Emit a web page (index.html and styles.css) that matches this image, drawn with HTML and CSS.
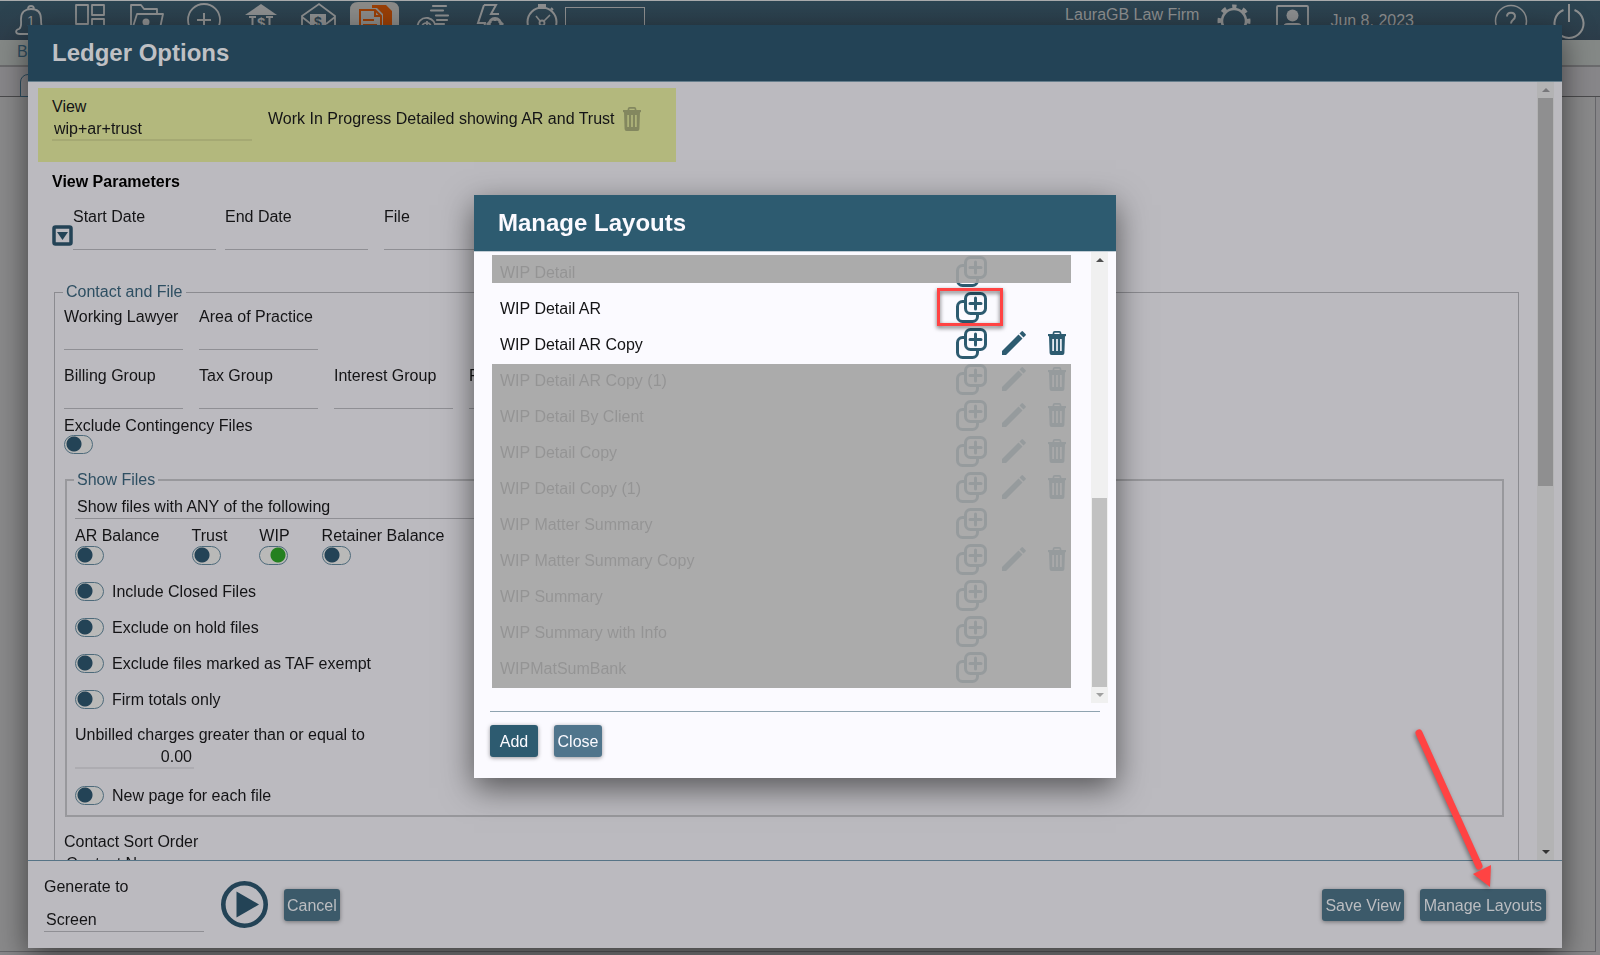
FILE: index.html
```html
<!DOCTYPE html>
<html lang="en">
<head>
<meta charset="utf-8">
<title>Ledger Options</title>
<link rel="stylesheet" href="styles.css">
</head>
<body>
<svg class="defs" aria-hidden="true">
  <symbol id="copy" viewBox="0 0 31 31">
    <path d="M9 9.500H6.500a5 5 0 0 0-5 5v10a5 5 0 0 0 5 5h10a5 5 0 0 0 5-5V22M14.500 1.500h10a5 5 0 0 1 5 5v10a5 5 0 0 1-5 5h-10a5 5 0 0 1-5-5v-10a5 5 0 0 1 5-5z" fill="none" stroke="currentColor" stroke-width="3"/>
    <path d="M19.500 6v11M14 11.500h11" stroke="currentColor" stroke-width="3" stroke-linecap="round"/>
  </symbol>
  <symbol id="pencil" viewBox="0 0 24 24">
    <path d="M0 24v-4L16.500 3.500l4 4L4 24zM17.500 2.500l2-2a1 1 0 0 1 1.500 0l2.500 2.500a1 1 0 0 1 0 1.500l-2 2z" fill="currentColor"/>
  </symbol>
  <symbol id="trash" viewBox="0 0 18 24">
    <path d="M5.500 3.500V2A1.200 1.200 0 0 1 6.700.9h4.600A1.200 1.200 0 0 1 12.500 2v1.500" fill="none" stroke="currentColor" stroke-width="1.700"/>
    <path d="M0 3h18v2.200H0z" fill="currentColor"/>
    <path fill-rule="evenodd" d="M1 5h16l-.6 17a2 2 0 0 1-2 2H3.600a2 2 0 0 1-2-2zM4.300 8v12h1.600V8zM8.200 8v12h1.600V8zM12.100 8v12h1.600V8z" fill="currentColor"/>
  </symbol>
</svg>

<div class="app">
  <nav class="topbar">
    <svg class="cell" viewBox="0 0 57 40"><path d="M16 34c-5 0-5-4-1-5 3-2 2-5 2-10 0-7 4-10 10-10s10 3 10 10c0 5 0 8 2 10M16 34h8l4 3 4-3M24 9c0-4 6-4 6 0" fill="none" stroke="currentColor" stroke-width="1.800"/><text x="23" y="26" font-size="14" fill="currentColor">1</text></svg>
    <svg class="cell" viewBox="0 0 57 40"><path d="M15 5h12v19H15zM31 5h12v10H31zM31 19h12v18H31zM15 28h12v9H15z" fill="none" stroke="currentColor" stroke-width="1.800" stroke-linejoin="round"/></svg>
    <svg class="cell" viewBox="0 0 57 40"><path d="M13 33V5h10l3 4h13v5M13 33l6-19h26l-4 19z" fill="none" stroke="currentColor" stroke-width="1.800" stroke-linejoin="round"/><circle cx="28" cy="22" r="3.500" fill="currentColor"/></svg>
    <svg class="cell" viewBox="0 0 57 40"><circle cx="29" cy="20" r="16" fill="none" stroke="currentColor" stroke-width="1.800"/><path d="M29 13v14M22 20h14" stroke="currentColor" stroke-width="2"/></svg>
    <svg class="cell" viewBox="0 0 57 40"><path d="M13 15L29 4l16 11z" fill="currentColor"/><path d="M17 17h7M20.500 17v18M34 17h7M37.500 17v18" stroke="currentColor" stroke-width="2"/><text x="25" y="28" font-size="15" font-weight="bold" fill="currentColor">$</text></svg>
    <svg class="cell" viewBox="0 0 57 40"><path d="M13 16L30 4l16 12v20H13zM13 17l9 7M46 17l-9 7" fill="none" stroke="currentColor" stroke-width="1.800"/><path d="M21 14h16v14H21z" fill="currentColor"/><text class="dark" x="25" y="27" font-size="14" font-weight="bold">$</text></svg>
    <svg class="cell" viewBox="0 0 57 40"><path class="tile" d="M4 40V10q0-8 8-8h33q8 0 8 8v30z"/><path class="orange" d="M26 5h14l6 6v29H37V14l-6-6h-5z"/><path class="orange-line" d="M14 36V10h15l6 6v21M29 10v6h6M17 20h11M17 25h14"/></svg>
    <svg class="cell" viewBox="0 0 57 40"><path d="M30 6h13M28 10.500h12M33 15.500h12M34 20h10M32 24h9" stroke="currentColor" stroke-width="2.200" stroke-linecap="round"/><path d="M15 30c-2-8 4-13 10-12 5 1 8 5 7 10M19 27c0-5 9-6 9 0M24 21v6" fill="none" stroke="currentColor" stroke-width="1.800"/></svg>
    <svg class="cell" viewBox="0 0 57 40"><path d="M24 5h12l-5 9h8M24 5l-6 18h7l-2 13" fill="none" stroke="currentColor" stroke-width="2"/><path d="M29 26c0-10 12-10 12 0M31 21l-4 4M39 21l4 4M35 18v3" fill="none" stroke="currentColor" stroke-width="3"/></svg>
    <svg class="timer" viewBox="0 0 48 40"><circle cx="25" cy="22" r="14.500" fill="none" stroke="currentColor" stroke-width="2"/><path d="M22 5h6v3h-6zM34 8l2 2" stroke="currentColor" stroke-width="2" fill="currentColor"/><circle cx="25" cy="23" r="2.500" fill="none" stroke="currentColor" stroke-width="1.800"/><path d="M19 16l4 5M33 15l-6 6" stroke="currentColor" stroke-width="1.600"/></svg>
    <input class="quick" type="text" aria-label="Quick search">
    <span class="firm">LauraGB Law Firm</span>
    <svg class="gear" viewBox="0 0 40 40"><circle cx="20" cy="21" r="12" fill="none" stroke="currentColor" stroke-width="2.500"/><circle cx="20" cy="21" r="14.500" fill="none" stroke="currentColor" stroke-width="4" stroke-dasharray="5 6.400" stroke-dashoffset="2.500" transform="rotate(-90 20 21)"/></svg>
    <svg class="user" viewBox="0 0 40 40"><path d="M4 36V7q0-1 1-1h29q1 0 1 1v29" fill="none" stroke="currentColor" stroke-width="1.800"/><circle cx="19.500" cy="15.500" r="6" fill="currentColor"/><path d="M10 28q0-5 5-5h9q5 0 5 5v6H10z" fill="currentColor"/></svg>
    <span class="date">Jun 8, 2023</span>
    <svg class="help" viewBox="0 0 40 40"><circle cx="20" cy="21" r="15.500" fill="none" stroke="currentColor" stroke-width="1.500"/><path d="M16 16.500c0-5 8-5 8 0 0 3.500-4 3-4 7" fill="none" stroke="currentColor" stroke-width="2"/></svg>
    <svg class="power" viewBox="0 0 40 40"><path d="M13.500 10a14.500 14.500 0 1 0 11 0M19 4v18" fill="none" stroke="currentColor" stroke-width="2"/></svg>
  </nav>
  <div class="crumbs">B</div>
  <div class="tabs"><div class="tab"></div></div>
  <div class="page"></div>
</div>

<div class="stage">
  <section class="dialog" aria-labelledby="ledger-title">
    <header class="bar"><h1 id="ledger-title">Ledger Options</h1></header>
    <div class="scroller">
      <div class="content">
        <div class="view-box">
          <div class="field view-field">
            <label for="view">View</label>
            <select id="view" class="line"><option>wip+ar+trust</option></select>
          </div>
          <span>Work In Progress Detailed showing AR and Trust</span>
          <button class="icon" aria-label="Delete view"><svg class="trash"><use href="#trash"/></svg></button>
        </div>
        <h2>View Parameters</h2>
        <div class="dates">
          <button class="icon drop" aria-label="Date presets"><svg viewBox="0 0 21 21"><rect x="2" y="2" width="17" height="17" rx="1.500" fill="none" stroke="currentColor" stroke-width="3.500"/><path d="M5 7h11l-5.500 8z" fill="currentColor"/></svg></button>
          <div class="field"><label for="start">Start Date</label><input id="start" class="line" type="text"></div>
          <div class="field"><label for="end">End Date</label><input id="end" class="line" type="text"></div>
          <div class="field file"><label for="file">File</label><input id="file" class="line" type="text"></div>
        </div>

        <fieldset class="contact">
          <legend>Contact and File</legend>
          <div class="cols first">
            <div class="field"><label for="lawyer">Working Lawyer</label><input id="lawyer" class="line" type="text"></div>
            <div class="field"><label for="area">Area of Practice</label><input id="area" class="line" type="text"></div>
          </div>
          <div class="cols second">
            <div class="field"><label for="billing">Billing Group</label><input id="billing" class="line" type="text"></div>
            <div class="field"><label for="tax">Tax Group</label><input id="tax" class="line" type="text"></div>
            <div class="field"><label for="interest">Interest Group</label><input id="interest" class="line" type="text"></div>
            <div class="field"><label for="fgroup">F</label><input id="fgroup" class="line" type="text"></div>
          </div>
          <label class="stack contingency">Exclude Contingency Files<input class="toggle" type="checkbox"></label>

          <fieldset class="files">
            <legend>Show Files</legend>
            <select class="line any" aria-label="Show files"><option>Show files with ANY of the following</option></select>
            <div class="balances">
              <label class="stack">AR Balance<input class="toggle" type="checkbox"></label>
              <label class="stack">Trust<input class="toggle" type="checkbox"></label>
              <label class="stack">WIP<input class="toggle" type="checkbox" checked></label>
              <label class="stack">Retainer Balance<input class="toggle" type="checkbox"></label>
            </div>
            <div class="checks">
              <label><input class="toggle" type="checkbox">Include Closed Files</label>
              <label><input class="toggle" type="checkbox">Exclude on hold files</label>
              <label><input class="toggle" type="checkbox">Exclude files marked as TAF exempt</label>
              <label><input class="toggle" type="checkbox">Firm totals only</label>
              <div class="field"><label for="unbilled">Unbilled charges greater than or equal to</label><input id="unbilled" class="line amount" type="text" value="0.00"></div>
              <label><input class="toggle" type="checkbox">New page for each file</label>
            </div>
          </fieldset>
          <div class="field sort"><label for="sort">Contact Sort Order</label><select id="sort" class="line"><option>Contact Name</option></select></div>
        </fieldset>
      </div>
      <div class="track" aria-hidden="true"><i class="up"></i><div class="rail"><div class="thumb"></div></div><i class="down"></i></div>
    </div>
    <footer class="actions">
      <div class="field generate"><label for="gen">Generate to</label><select id="gen" class="line"><option>Screen</option></select></div>
      <button class="icon play" aria-label="Generate"><svg viewBox="0 0 47 47"><circle cx="23.500" cy="23.500" r="21.200" fill="none" stroke="currentColor" stroke-width="4.600"/><path d="M15.500 10.500L38 23.500l-22.500 13z" fill="currentColor"/></svg></button>
      <button class="btn">Cancel</button>
      <button class="btn save">Save View</button>
      <button class="btn manage">Manage Layouts
        <svg class="pointer" viewBox="0 0 90 170" aria-hidden="true"><path d="M10 10L70 143" stroke="#ff4343" stroke-width="7" stroke-linecap="round"/><path d="M64 151l18-9-1 22z" fill="#ff4343" stroke="none"/></svg>
      </button>
    </footer>
  </section>
</div>

<div class="stage modal-stage">
  <section class="modal" aria-labelledby="modal-title">
    <header class="bar"><h1 id="modal-title">Manage Layouts</h1></header>
    <div class="modal-body">
      <div class="list-wrap">
        <ul class="list">
          <li><span>WIP Detail</span><button class="icon" aria-label="Copy"><svg class="copy"><use href="#copy"/></svg></button></li>
          <li><span>WIP Detail AR</span><button class="icon marked" aria-label="Copy"><svg class="copy"><use href="#copy"/></svg></button></li>
          <li><span>WIP Detail AR Copy</span><button class="icon" aria-label="Copy"><svg class="copy"><use href="#copy"/></svg></button><button class="icon" aria-label="Edit"><svg class="pencil"><use href="#pencil"/></svg></button><button class="icon" aria-label="Delete"><svg class="trash"><use href="#trash"/></svg></button></li>
          <li><span>WIP Detail AR Copy (1)</span><button class="icon" aria-label="Copy"><svg class="copy"><use href="#copy"/></svg></button><button class="icon" aria-label="Edit"><svg class="pencil"><use href="#pencil"/></svg></button><button class="icon" aria-label="Delete"><svg class="trash"><use href="#trash"/></svg></button></li>
          <li><span>WIP Detail By Client</span><button class="icon" aria-label="Copy"><svg class="copy"><use href="#copy"/></svg></button><button class="icon" aria-label="Edit"><svg class="pencil"><use href="#pencil"/></svg></button><button class="icon" aria-label="Delete"><svg class="trash"><use href="#trash"/></svg></button></li>
          <li><span>WIP Detail Copy</span><button class="icon" aria-label="Copy"><svg class="copy"><use href="#copy"/></svg></button><button class="icon" aria-label="Edit"><svg class="pencil"><use href="#pencil"/></svg></button><button class="icon" aria-label="Delete"><svg class="trash"><use href="#trash"/></svg></button></li>
          <li><span>WIP Detail Copy (1)</span><button class="icon" aria-label="Copy"><svg class="copy"><use href="#copy"/></svg></button><button class="icon" aria-label="Edit"><svg class="pencil"><use href="#pencil"/></svg></button><button class="icon" aria-label="Delete"><svg class="trash"><use href="#trash"/></svg></button></li>
          <li><span>WIP Matter Summary</span><button class="icon" aria-label="Copy"><svg class="copy"><use href="#copy"/></svg></button></li>
          <li><span>WIP Matter Summary Copy</span><button class="icon" aria-label="Copy"><svg class="copy"><use href="#copy"/></svg></button><button class="icon" aria-label="Edit"><svg class="pencil"><use href="#pencil"/></svg></button><button class="icon" aria-label="Delete"><svg class="trash"><use href="#trash"/></svg></button></li>
          <li><span>WIP Summary</span><button class="icon" aria-label="Copy"><svg class="copy"><use href="#copy"/></svg></button></li>
          <li><span>WIP Summary with Info</span><button class="icon" aria-label="Copy"><svg class="copy"><use href="#copy"/></svg></button></li>
          <li><span>WIPMatSumBank</span><button class="icon" aria-label="Copy"><svg class="copy"><use href="#copy"/></svg></button></li>
        </ul>
        <div class="mask mask-top"></div>
        <div class="mask mask-rest"></div>
      </div>
      <div class="track light" aria-hidden="true"><i class="up"></i><div class="rail"><div class="thumb"></div></div><i class="down"></i></div>
    </div>
    <footer class="modal-actions">
      <button class="btn add">Add</button>
      <button class="btn close">Close</button>
    </footer>
  </section>
</div>
</body>
</html>
```

FILE: styles.css
```css
* { box-sizing: border-box; }

html, body { height: 100%; }

body {
  margin: 0;
  overflow: hidden;
  background: #88878a;
  color: #141416;
  font: 16px/18px "Liberation Sans", Arial, sans-serif;
}

h1, h2, ul, fieldset { margin: 0; padding: 0; }

button, input, select {
  margin: 0;
  padding: 0;
  border: 0;
  border-radius: 0;
  background: none;
  color: inherit;
  font: inherit;
}

svg { display: block; }
.defs { position: absolute; width: 0; height: 0; }

/* Application behind the dialogs */
.app {
  display: flex;
  flex-direction: column;
  height: 100%;
  padding-bottom: 3px;
}

.topbar {
  display: flex;
  flex: none;
  height: 40px;
  padding: 0 10px 0 4px;
  border-top: 1px solid #a9abac;
  background: linear-gradient(#2c4552, #2d3d4a);
  color: #8d8f90;
}

.topbar svg { flex: none; height: 40px; margin-top: -1px; }
.cell { width: 57px; }
.timer { width: 48px; }
.dark { fill: #2d414e; }
.tile { fill: #8b8b89; }
.orange { fill: #9a3f06; }
.orange-line { fill: #8b8b89; stroke: #9a3f06; stroke-width: 2; }

.quick {
  width: 80px;
  height: 28px;
  margin-top: 6px;
  border: 1px solid #8d8f90;
}

.firm { margin: 5px 15px 0 auto; }
.gear { width: 40px; margin-right: 19px; }
.user { width: 40px; margin-right: 17px; }
.date { margin: 11px 77px 0 0; }
.help { width: 40px; margin-right: 19px; }
.power { width: 40px; }

.crumbs {
  flex: none;
  height: 27px;
  padding: 3px 17px;
  border-bottom: 2px solid #6b6b6d;
  background: #858987;
  color: #2e4f62;
}

.tabs {
  flex: none;
  height: 30px;
  padding: 7px 20px 0;
  border-bottom: 1px solid #4b4b4d;
}

.tab {
  width: 120px;
  height: 23px;
  border: 1px solid #2e4f62;
  border-radius: 8px 8px 0 0;
}

.page {
  flex: 1;
  margin-right: 4px;
  border: solid #66666a;
  border-width: 0 1px 1px 0;
  background: #8a8a8b;
}

/* Dialog frames */
.stage {
  position: fixed;
  inset: 0;
  display: flex;
  padding: 25px 38px 7px 28px;
}

.dialog {
  display: flex;
  flex: 1;
  flex-direction: column;
  min-width: 0;
  background: #bbbabf;
  box-shadow: 0 10px 30px rgba(0, 0, 0, .55);
}

.bar {
  flex: none;
  height: 57px;
  padding: 14px 24px;
  border-bottom: 1px solid #667e8c;
  background: #234356;
  color: #bfc0c4;
}

.bar h1 { font-size: 24px; line-height: 28px; }

.scroller { display: flex; flex: 1; min-height: 0; padding-right: 8px; }

.content {
  flex: 1;
  overflow: hidden;
  padding: 6px 18px 0 24px;
}

.view-box {
  display: flex;
  align-items: flex-start;
  width: 638px;
  height: 74px;
  margin-left: -14px;
  padding: 10px 14px;
  background: #b3b87d;
}

.view-box > span { margin: 12px 8px 0 16px; }
.view-box .icon { margin-top: 9px; color: #83875f; }
.view-field { width: 200px; }
.view-box .line { border-bottom: 2px solid #a5a973; }

.field { display: flex; flex-direction: column; }

.line {
  width: 100%;
  height: 24px;
  border-bottom: 1px solid #8f8f94;
  appearance: none;
}

select.line { height: 25px; padding: 2px 2px 0; }

.icon { display: grid; place-items: center; color: #234356; }
.trash { width: 18px; height: 24px; }
.pencil { width: 24px; height: 24px; }
.copy { width: 31px; height: 31px; }

h2 { margin-top: 11px; font-size: 16px; line-height: 18px; color: #000; }

.dates { display: flex; align-items: flex-end; margin-top: 17px; }
.dates .field { width: 143px; margin-right: 9px; }
.dates .file { margin-left: 7px; }
.drop { width: 21px; height: 21px; margin-bottom: 4px; }
.drop svg { width: 21px; height: 21px; }

fieldset { min-width: 0; border: 1px solid #8b8b90; }
legend { margin-left: -1px; padding: 0 3px; color: #2e4f62; }

.contact { margin: 33px 0 0 2px; padding: 0 14px 10px 9px; }
.cols { display: flex; gap: 16px; }
.cols .field { width: 119px; }
.first { margin-top: 7px; }
.second { margin-top: 17px; }

.stack { display: flex; flex-direction: column; align-items: flex-start; gap: 1px; }
.contingency { gap: 0; margin-top: 8px; }

.toggle {
  flex: none;
  width: 29px;
  height: 19px;
  border: 1px solid #4d6a7a;
  border-radius: 10px;
  appearance: none;
  background: radial-gradient(circle at 9px 8px, #234356 7px, #b9b9b8 8px);
}

.toggle:checked {
  background: radial-gradient(circle at 18px 8px, #24801f 7px, #b9b9b8 8px);
}

.files { margin: 17px 0 0 1px; padding: 0 8px 10px; border-width: 2px; border-color: #98989c; }
.any { width: 50%; margin-top: 5px; }
.balances { display: flex; gap: 32px; margin-top: 8px; }
.checks { display: flex; flex-direction: column; gap: 17px; margin-top: 17px; }
.checks > label { display: flex; align-items: center; gap: 8px; }

.amount {
  width: 119px;
  height: 25px;
  padding: 2px 2px 0 0;
  border-bottom: 2px solid #adacb1;
  text-align: right;
}

.sort { width: 240px; margin-top: 16px; }

/* Scroll bars */
.track {
  display: flex;
  flex: none;
  flex-direction: column;
  align-items: center;
  width: 17px;
  background: #b3b3b4;
}

.track i { width: 0; height: 0; border: solid transparent; border-width: 0 4px; }
.up { margin: 6px 0; }
.track .up { border-bottom: 4px solid #77777a; }
.down { margin: 6px 0; }
.track .down { border-top: 4px solid #333; }
.rail { flex: 1; align-self: stretch; padding: 0 1px; }
.thumb { height: 52%; background: #8f8f90; }
.light { background: #f0f0f0; }
.light .up { border-bottom-color: #505050; }
.light .down { border-top-color: #a0a0a0; }
.light .rail { display: flex; align-items: flex-end; }
.light .thumb { width: 100%; height: 45%; background: #c1c1c1; }

.btn {
  min-width: 48px;
  height: 32px;
  padding: 2px 3px 0;
  border-radius: 3px;
  background: #3c5a6a;
  box-shadow: 0 1px 4px rgba(0, 0, 0, .4);
  color: #bbbdc1;
  white-space: nowrap;
}

.actions {
  display: flex;
  flex: none;
  align-items: center;
  height: 88px;
  padding: 0 16px;
  border-top: 1px solid #567486;
}

.generate { width: 160px; gap: 11px; margin-right: 17px; padding-top: 1px; }
.play { margin-right: 16px; }
.play svg { width: 47px; height: 47px; }
.save { margin: 0 16px 0 auto; }
.manage { position: relative; padding: 2px 4px 0; }

.pointer {
  position: absolute;
  right: 47px;
  bottom: 28px;
  width: 90px;
  height: 170px;
  filter: drop-shadow(-1px 2px 2px rgba(0, 0, 0, .4));
}

/* Manage Layouts */
.modal-stage {
  align-items: center;
  justify-content: center;
  padding: 18px 10px 0 0;
}

.modal {
  display: flex;
  flex-direction: column;
  width: 642px;
  height: 61vh;
  background: #fbfaff;
  box-shadow: 0 10px 30px rgba(0, 0, 0, .55);
}

.modal .bar { border-color: #c2cdd6; background: #2d5b70; color: #fbfaff; }
.modal .icon { color: #2d5b70; }

.modal-body { display: flex; flex: 1; min-height: 0; padding: 0 8px 0 16px; }
.list-wrap { position: relative; flex: 1; overflow: hidden; }
.list { padding: 1px 13px 0 10px; list-style: none; }

.list li {
  display: grid;
  grid-template-columns: 1fr 41px 43px 43px;
  align-items: center;
  height: 36px;
}

.list span { padding-top: 3px; }

.mask { position: absolute; left: 2px; right: 20px; background: rgba(162, 162, 162, .9); }
.mask-top { top: 3px; height: 28px; }
.mask-rest { top: 112px; height: 324px; }

.marked { position: relative; }

.marked::after {
  content: "";
  position: absolute;
  inset: -4px -11px -3px -14px;
  border: 3px solid #ff4343;
  filter: drop-shadow(0 2px 2px rgba(0, 0, 0, .6));
}

.modal-actions {
  display: flex;
  flex: none;
  gap: 16px;
  margin: 8px 16px 0;
  padding: 13px 0 21px;
  border-top: 1px solid #8fa3b0;
}

.add { background: #2d5b70; color: #fbfaff; }
.close { background: #50758c; color: #fbfaff; }
```
